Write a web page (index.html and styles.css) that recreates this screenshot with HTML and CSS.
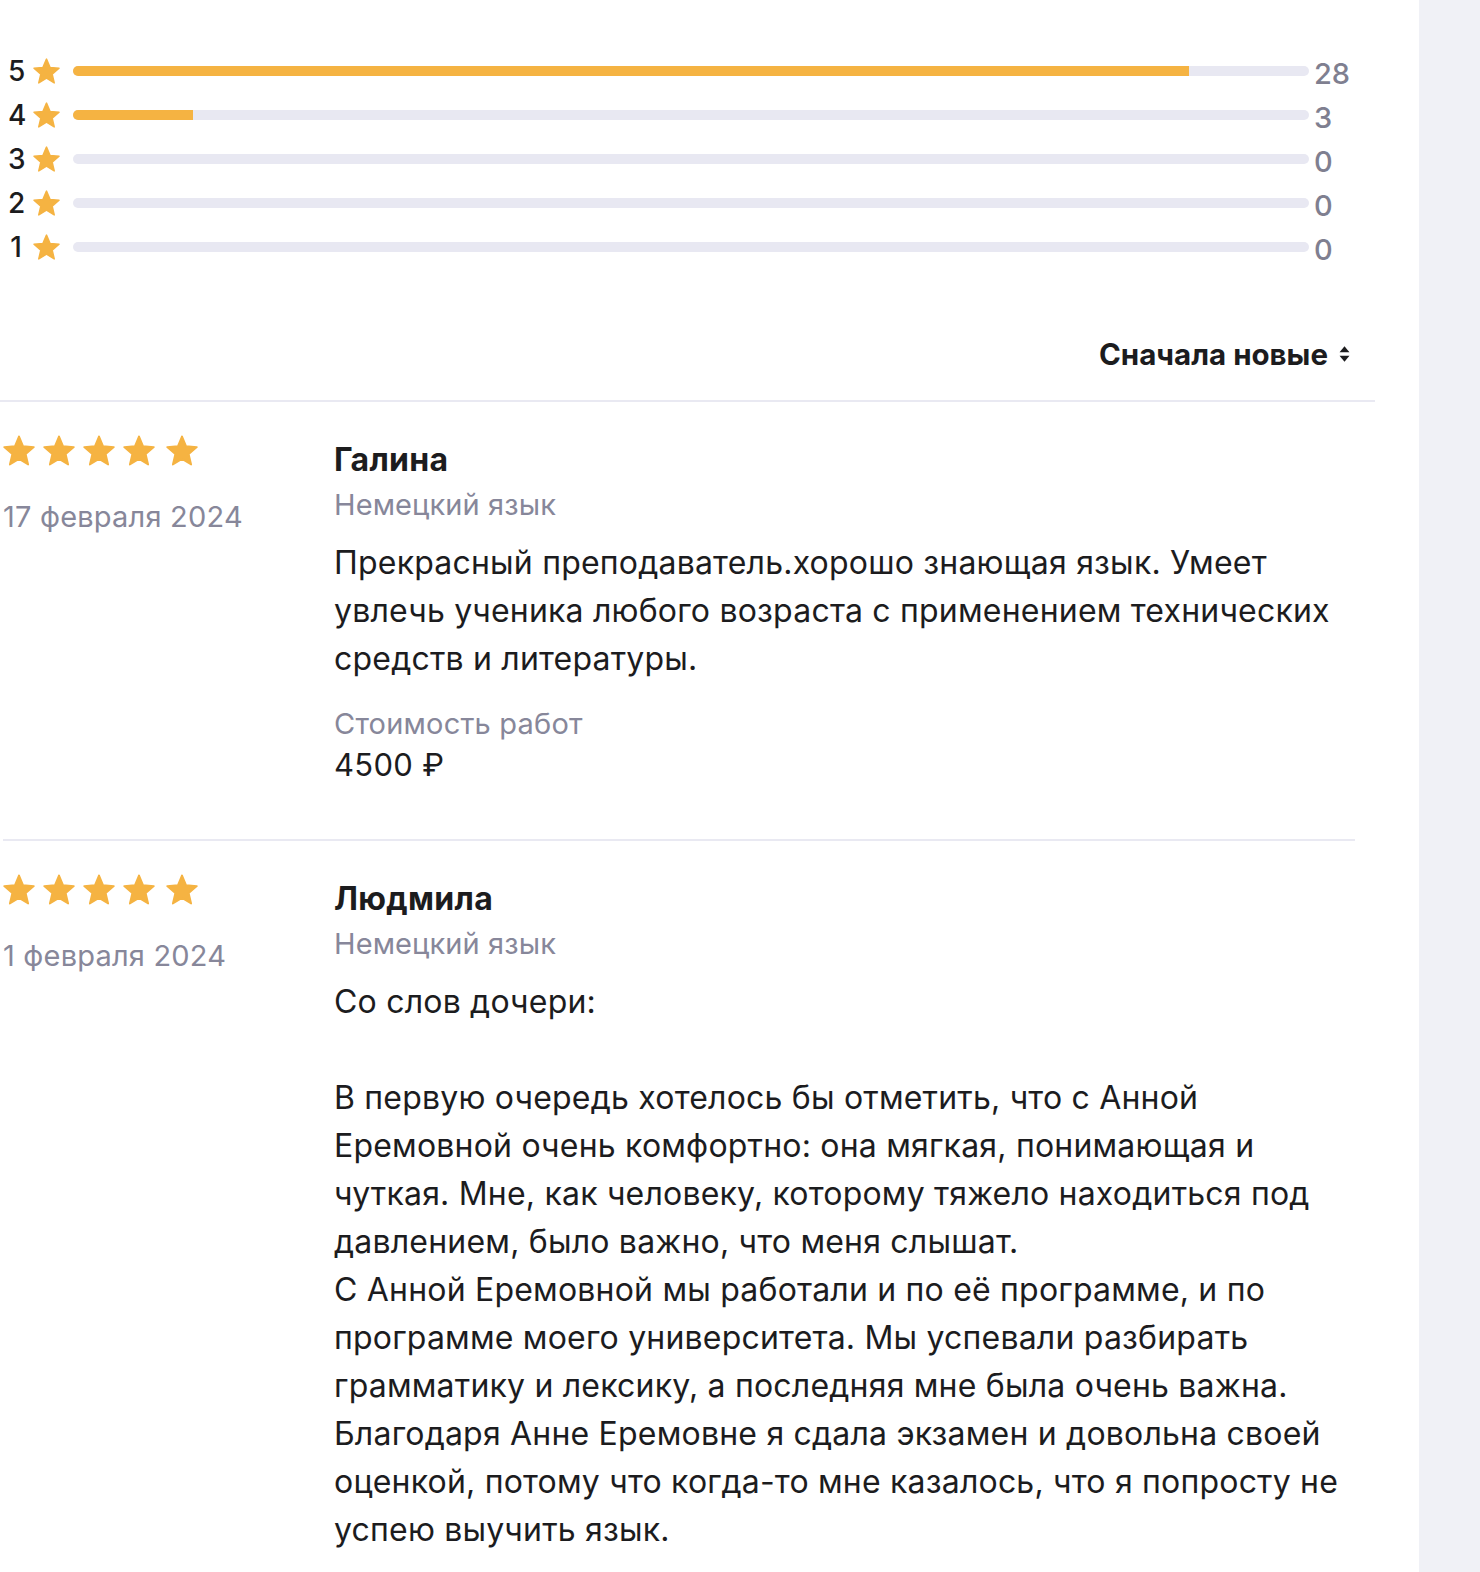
FILE: index.html
```html
<!DOCTYPE html>
<html lang="ru">
<head>
<meta charset="utf-8">
<title>Отзывы</title>
<link rel="stylesheet" href="styles.css">
</head>
<body>
<div class="page">
  <main class="main">
    <section class="ratings">
      <div class="rating-row">
        <span class="rating-num">5</span>
        <svg class="rating-star" viewBox="1.2 1.2 21.6 20.6"><path d="M12 17.27L18.18 21l-1.64-7.03L22 9.24l-7.19-.61L12 2 9.19 8.63 2 9.24l5.46 4.73L5.82 21z"/></svg>
        <div class="bar"><div class="bar-fill" style="width:90.32%"></div></div>
        <span class="rating-count">28</span>
      </div>
      <div class="rating-row">
        <span class="rating-num">4</span>
        <svg class="rating-star" viewBox="1.2 1.2 21.6 20.6"><path d="M12 17.27L18.18 21l-1.64-7.03L22 9.24l-7.19-.61L12 2 9.19 8.63 2 9.24l5.46 4.73L5.82 21z"/></svg>
        <div class="bar"><div class="bar-fill" style="width:9.68%"></div></div>
        <span class="rating-count">3</span>
      </div>
      <div class="rating-row">
        <span class="rating-num">3</span>
        <svg class="rating-star" viewBox="1.2 1.2 21.6 20.6"><path d="M12 17.27L18.18 21l-1.64-7.03L22 9.24l-7.19-.61L12 2 9.19 8.63 2 9.24l5.46 4.73L5.82 21z"/></svg>
        <div class="bar"></div>
        <span class="rating-count">0</span>
      </div>
      <div class="rating-row">
        <span class="rating-num">2</span>
        <svg class="rating-star" viewBox="1.2 1.2 21.6 20.6"><path d="M12 17.27L18.18 21l-1.64-7.03L22 9.24l-7.19-.61L12 2 9.19 8.63 2 9.24l5.46 4.73L5.82 21z"/></svg>
        <div class="bar"></div>
        <span class="rating-count">0</span>
      </div>
      <div class="rating-row">
        <span class="rating-num">1</span>
        <svg class="rating-star" viewBox="1.2 1.2 21.6 20.6"><path d="M12 17.27L18.18 21l-1.64-7.03L22 9.24l-7.19-.61L12 2 9.19 8.63 2 9.24l5.46 4.73L5.82 21z"/></svg>
        <div class="bar"></div>
        <span class="rating-count">0</span>
      </div>
    </section>

    <div class="sort">
      <span class="sort-label">Сначала новые</span>
      <svg class="sort-icon" viewBox="0 0 10 20"><path d="M5 3L9.5 8.5H0.5Z"/><path d="M5 17L9.5 11.5H0.5Z"/></svg>
    </div>

    <hr class="divider divider-full">

    <article class="review">
      <div class="review-side">
        <div class="stars">
          <svg class="star" viewBox="1.2 1.2 21.6 20.6"><path d="M12 17.27L18.18 21l-1.64-7.03L22 9.24l-7.19-.61L12 2 9.19 8.63 2 9.24l5.46 4.73L5.82 21z"/></svg>
          <svg class="star" viewBox="1.2 1.2 21.6 20.6"><path d="M12 17.27L18.18 21l-1.64-7.03L22 9.24l-7.19-.61L12 2 9.19 8.63 2 9.24l5.46 4.73L5.82 21z"/></svg>
          <svg class="star" viewBox="1.2 1.2 21.6 20.6"><path d="M12 17.27L18.18 21l-1.64-7.03L22 9.24l-7.19-.61L12 2 9.19 8.63 2 9.24l5.46 4.73L5.82 21z"/></svg>
          <svg class="star" viewBox="1.2 1.2 21.6 20.6"><path d="M12 17.27L18.18 21l-1.64-7.03L22 9.24l-7.19-.61L12 2 9.19 8.63 2 9.24l5.46 4.73L5.82 21z"/></svg>
          <svg class="star star-last" viewBox="1.2 1.2 21.6 20.6"><path d="M12 17.27L18.18 21l-1.64-7.03L22 9.24l-7.19-.61L12 2 9.19 8.63 2 9.24l5.46 4.73L5.82 21z"/></svg>
        </div>
        <div class="review-date">17 февраля 2024</div>
      </div>
      <div class="review-body">
        <div class="review-name">Галина</div>
        <div class="review-subject">Немецкий язык</div>
        <p class="review-text">Прекрасный преподаватель.хорошо знающая язык. Умеет увлечь ученика любого возраста с применением технических средств и литературы.</p>
        <div class="review-price-label">Стоимость работ</div>
        <div class="review-price">4500 ₽</div>
      </div>
    </article>

    <hr class="divider divider-inset">

    <article class="review">
      <div class="review-side">
        <div class="stars">
          <svg class="star" viewBox="1.2 1.2 21.6 20.6"><path d="M12 17.27L18.18 21l-1.64-7.03L22 9.24l-7.19-.61L12 2 9.19 8.63 2 9.24l5.46 4.73L5.82 21z"/></svg>
          <svg class="star" viewBox="1.2 1.2 21.6 20.6"><path d="M12 17.27L18.18 21l-1.64-7.03L22 9.24l-7.19-.61L12 2 9.19 8.63 2 9.24l5.46 4.73L5.82 21z"/></svg>
          <svg class="star" viewBox="1.2 1.2 21.6 20.6"><path d="M12 17.27L18.18 21l-1.64-7.03L22 9.24l-7.19-.61L12 2 9.19 8.63 2 9.24l5.46 4.73L5.82 21z"/></svg>
          <svg class="star" viewBox="1.2 1.2 21.6 20.6"><path d="M12 17.27L18.18 21l-1.64-7.03L22 9.24l-7.19-.61L12 2 9.19 8.63 2 9.24l5.46 4.73L5.82 21z"/></svg>
          <svg class="star star-last" viewBox="1.2 1.2 21.6 20.6"><path d="M12 17.27L18.18 21l-1.64-7.03L22 9.24l-7.19-.61L12 2 9.19 8.63 2 9.24l5.46 4.73L5.82 21z"/></svg>
        </div>
        <div class="review-date">1 февраля 2024</div>
      </div>
      <div class="review-body">
        <div class="review-name">Людмила</div>
        <div class="review-subject">Немецкий язык</div>
        <p class="review-text review-text-pre">Со слов дочери:

В первую очередь хотелось бы отметить, что с Анной Еремовной очень комфортно: она мягкая, понимающая и чуткая. Мне, как человеку, которому тяжело находиться под давлением, было важно, что меня слышат.
С Анной Еремовной мы работали и по её программе, и по программе моего университета. Мы успевали разбирать грамматику и лексику, а последняя мне была очень важна.
Благодаря Анне Еремовне я сдала экзамен и довольна своей оценкой, потому что когда-то мне казалось, что я попросту не успею выучить язык.</p>
      </div>
    </article>
  </main>
  <aside class="sidebar"></aside>
</div>
</body>
</html>
```

FILE: styles.css
```css
* { box-sizing: border-box; }

html, body {
  margin: 0;
  padding: 0;
  background: #ffffff;
}

body {
  font-family: Inter, "Noto Sans", "Liberation Sans", sans-serif;
  color: #1c1c1e;
  -webkit-font-smoothing: antialiased;
}

.page {
  display: flex;
  min-height: 1572px;
}

.main {
  width: 1419px;
  flex: none;
  overflow: hidden;
  height: 1572px;
}

.sidebar {
  flex: 1;
  background: #f0f1f6;
}

/* ratings */
.ratings {
  width: 1350px;
  padding: 49px 0 0 8px;
}

.rating-row {
  display: flex;
  align-items: center;
  height: 44px;
}

.rating-num {
  width: 16px;
  text-align: center;
  font-size: 28px;
  font-weight: 500;
  line-height: 1;
  color: #1c1c1e;
}

.rating-star {
  width: 27px;
  height: 26px;
  margin-left: 9px;
  fill: #f5b342;
  stroke: #f5b342;
  stroke-width: 1.2;
  stroke-linejoin: round;
  flex: none;
}

.bar {
  flex: 1;
  height: 10px;
  margin-left: 13px;
  border-radius: 5px;
  background: #e8e8f2;
  overflow: hidden;
}

.bar-fill {
  height: 100%;
  background: #f5b342;
}

.rating-count {
  width: 36px;
  margin-left: 5px;
  padding-top: 4px;
  font-size: 29px;
  font-weight: 500;
  line-height: 1;
  color: #7f7f90;
}

/* sort */
.sort {
  width: 1350px;
  margin-top: 65px;
  height: 40px;
  display: flex;
  align-items: center;
  justify-content: flex-end;
  gap: 11px;
}

.sort-label {
  font-size: 29.5px;
  font-weight: 700;
  line-height: 40px;
  color: #1c1c1e;
}

.sort-icon {
  width: 11px;
  height: 22px;
  fill: #1c1c1e;
}

/* dividers */
.divider {
  border: none;
  height: 2px;
  background: #e9e9f2;
  margin: 0;
}

.divider-full {
  margin-top: 26px;
  width: 1375px;
}

.divider-inset {
  margin-left: 3px;
  width: 1352px;
}

/* reviews */
.review {
  display: grid;
  grid-template-columns: 334px 1018px;
  padding: 34px 0 54px 0;
}

.review-body {
  padding-top: 2px;
}

.stars {
  display: flex;
  gap: 8px;
  padding-left: 3px;
  margin-top: -1px;
}

.star {
  width: 32px;
  height: 31px;
  fill: #f5b342;
  stroke: #f5b342;
  stroke-width: 1.2;
  stroke-linejoin: round;
  flex: none;
}

.star-last {
  margin-left: 3px;
}

.review-date {
  margin-top: 31px;
  padding-left: 3px;
  font-size: 29px;
  letter-spacing: 0.2px;
  line-height: 40px;
  color: #87879a;
}

.review-name {
  font-size: 32px;
  font-weight: 700;
  letter-spacing: 0.3px;
  line-height: 44px;
  color: #1c1c1e;
}

.review-subject {
  margin-top: 1px;
  font-size: 29px;
  letter-spacing: 0.1px;
  line-height: 44px;
  color: #87879a;
}

.review-text {
  margin: 12px 0 0 0;
  font-size: 32px;
  letter-spacing: 0.2px;
  line-height: 48px;
  color: #1c1c1e;
}

.review-text-pre {
  white-space: pre-line;
}

.review-price-label {
  margin-top: 21px;
  font-size: 29px;
  letter-spacing: 0.2px;
  line-height: 40px;
  color: #87879a;
}

.review-price {
  margin-top: 1px;
  font-size: 31px;
  letter-spacing: 0.3px;
  line-height: 40px;
  color: #1c1c1e;
}
```
